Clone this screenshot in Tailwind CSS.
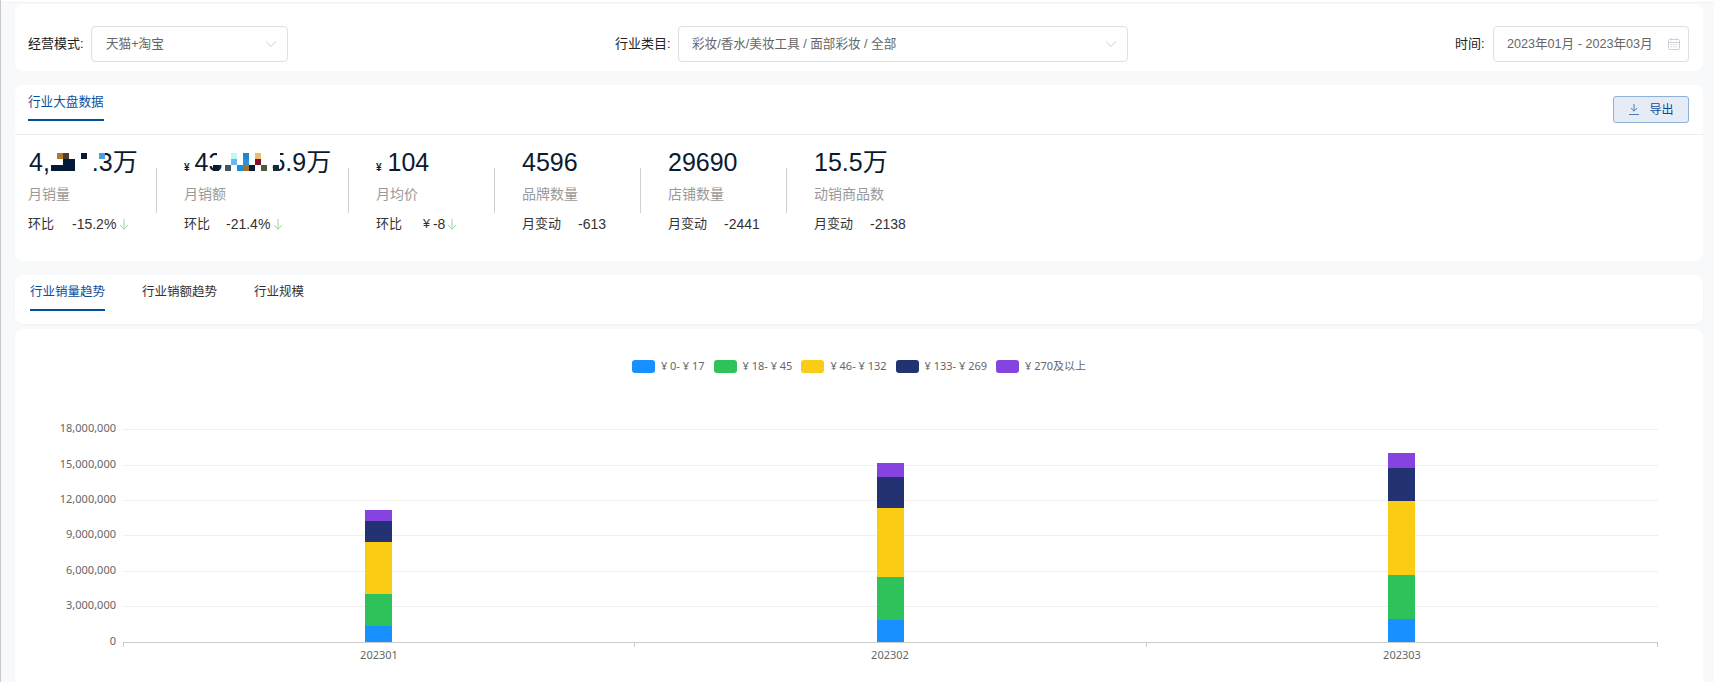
<!DOCTYPE html>
<html lang="zh">
<head>
<meta charset="utf-8">
<title>行业大盘数据</title>
<script src="https://cdn.jsdelivr.net/npm/@tailwindcss/browser@4"></script>
</head>
<body class="m-0">
<div class="w-[1714px] h-[682px] overflow-hidden bg-[#f8f9fb] border-l border-[#c8c8cc] pl-[14px] pr-[11px] text-[#333] [font-family:'Liberation_Sans','Noto_Sans_CJK_SC',sans-serif]">

  <div class="-ml-[14px] -mr-[11px] h-[3px] bg-white border-b border-[#f2f2f2] mb-px"></div>

  <!-- filters -->
  <div class="h-[67px] bg-white rounded-lg pt-[22px] pl-[13px] pr-[14px] flex justify-between items-start text-[12.6px]">
    <div class="flex items-center">
      <span class="w-[63px] text-[13px] text-[#222]">经营模式:</span>
      <div class="w-[197px] h-[36px] border border-[#dcdfe6] rounded flex items-center justify-between pl-[14px] pr-[10px] text-[#666]">
        <span>天猫+淘宝</span>
        <svg class="w-[12px] h-[8px]" viewBox="0 0 12 8" fill="none" stroke="#c8cbd2" stroke-width="1"><path d="M1 1.5 L6 6.5 L11 1.5"/></svg>
      </div>
    </div>
    <div class="flex items-center">
      <span class="w-[63px] text-[13px] text-[#222]">行业类目:</span>
      <div class="w-[450px] h-[36px] border border-[#dcdfe6] rounded flex items-center justify-between pl-[13px] pr-[10px] text-[#666]">
        <span>彩妆/香水/美妆工具 / 面部彩妆 / 全部</span>
        <svg class="w-[12px] h-[8px]" viewBox="0 0 12 8" fill="none" stroke="#c8cbd2" stroke-width="1"><path d="M1 1.5 L6 6.5 L11 1.5"/></svg>
      </div>
    </div>
    <div class="flex items-center">
      <span class="w-[38px] text-[13px] text-[#222]">时间:</span>
      <div class="w-[196px] h-[36px] border border-[#dcdfe6] rounded flex items-center justify-between pl-[13px] pr-[8px] text-[#666]">
        <span>2023年01月 - 2023年03月</span>
        <svg class="w-[12px] h-[12px]" viewBox="0 0 12 12" fill="none" stroke="#cdd0d6" stroke-width="1"><rect x="0.5" y="1.5" width="11" height="10" rx="1"/><path d="M0.5 4.5 H11.5 M3 0 V2.5 M9 0 V2.5"/><path d="M2.5 6.5 H9.5 M2.5 8.8 H9.5" stroke-dasharray="1.4 1"/></svg>
      </div>
    </div>
  </div>

  <!-- overview -->
  <div class="mt-[14px] h-[176px] bg-white rounded-lg">
    <div class="h-[50px] border-b border-[#ececec] pl-[13px] pr-[14px] flex justify-between items-start">
      <div class="mt-[8px] leading-[18px] pb-[8px] text-[12.6px] text-[#0b4e9c] border-b-2 border-[#004ea0]">行业大盘数据</div>
      <button class="mt-[11px] w-[76px] h-[27px] flex items-center justify-center gap-[10px] pl-px bg-[#e5ecf5] border border-[#8fb0d5] rounded-[3px] text-[12px] text-[#0b4e9c]">
        <svg class="w-[10px] h-[11px]" viewBox="0 0 10 11" fill="none" stroke="#4a7db5" stroke-width="1"><path d="M5 0 V7 M1.8 4 L5 7.2 L8.2 4 M0 10.5 H10"/></svg>
        <span>导出</span>
      </button>
    </div>
    <div class="flex pl-[13px] pt-[9px]">
      <!-- 月销量 -->
      <div class="w-[128px]">
        <div class="relative h-[36px] pl-px text-[25px] leading-[36px] text-[#0c1a2e] whitespace-nowrap">4,<span class="inline-block w-[42px]"></span>.3万
          <svg class="absolute left-0 top-0 w-[120px] h-[36px]" viewBox="0 0 120 36" shape-rendering="crispEdges" aria-hidden="true">
            <rect x="28.7" y="8.7" width="6" height="6" fill="#b07a2a"/><rect x="34.7" y="8.7" width="6" height="6" fill="#4a3f2f"/><rect x="53" y="8.7" width="6" height="6" fill="#0b1a33"/><rect x="71" y="8.7" width="6" height="6" fill="#4a9fdc"/>
            <rect x="34.7" y="14.7" width="12" height="6" fill="#021a35"/><rect x="22.7" y="20.7" width="24" height="6" fill="#021a35"/>
          </svg>
        </div>
        <div class="mt-[4px] text-[14px] leading-[20px] text-[#999]">月销量</div>
        <div class="mt-[10px] flex items-center leading-[20px] whitespace-nowrap"><span class="text-[13px] w-[44px]">环比</span><span class="text-[14px]">-15.2%</span>
          <svg class="ml-[3px] w-[10px] h-[11px]" viewBox="0 0 10 11" fill="none" stroke="#8fdc9f" stroke-width="1"><path d="M5 0 V10 M1 6 L5 10.3 L9 6"/></svg></div>
      </div>
      <div class="mt-[24px] h-[45px] w-px bg-[#d0d0d0] mr-[27px]"></div>
      <!-- 月销额 -->
      <div class="w-[164px]">
        <div class="relative h-[36px] text-[25px] leading-[36px] text-[#0c1a2e] whitespace-nowrap"><span class="text-[10px] font-bold mr-[5px]">¥</span>43<span class="inline-block w-[49px]"></span>5.9万
          <svg class="absolute left-0 top-0 w-[150px] h-[36px]" viewBox="0 0 150 36" shape-rendering="crispEdges" aria-hidden="true">
            <rect x="32.7" y="8" width="6" height="7" fill="#fff"/><rect x="29.3" y="14.7" width="9" height="6" fill="#fff"/><rect x="84" y="6" width="12" height="15" fill="#fff"/>
            <rect x="47.3" y="8.7" width="6" height="6" fill="#c4f5ff"/><rect x="59.3" y="8.7" width="6" height="6" fill="#1e86c9"/><rect x="71.3" y="8.7" width="6" height="6" fill="#efb873"/>
            <rect x="47.3" y="14.7" width="6" height="6" fill="#6ab6ee"/><rect x="59.3" y="14.7" width="6" height="6" fill="#2f8fd6"/><rect x="71.3" y="14.7" width="6" height="6" fill="#7f0f2a"/>
            <rect x="29.3" y="20.7" width="6" height="6" fill="#0a1c33"/><rect x="41.3" y="20.7" width="6" height="6" fill="#3f5a5c"/><rect x="53.3" y="20.7" width="6" height="6" fill="#0f93db"/><rect x="59.3" y="20.7" width="6" height="6" fill="#a9702e"/><rect x="65.3" y="20.7" width="6" height="6" fill="#0a1c33"/><rect x="77.3" y="20.7" width="6" height="6" fill="#4a5a3f"/><rect x="89.3" y="20.7" width="6" height="6" fill="#0a2f45"/>
          </svg>
        </div>
        <div class="mt-[4px] text-[14px] leading-[20px] text-[#999]">月销额</div>
        <div class="mt-[10px] flex items-center leading-[20px] whitespace-nowrap"><span class="text-[13px] w-[42px]">环比</span><span class="text-[14px]">-21.4%</span>
          <svg class="ml-[3px] w-[10px] h-[11px]" viewBox="0 0 10 11" fill="none" stroke="#8fdc9f" stroke-width="1"><path d="M5 0 V10 M1 6 L5 10.3 L9 6"/></svg></div>
      </div>
      <div class="mt-[24px] h-[45px] w-px bg-[#d0d0d0] mr-[27px]"></div>
      <!-- 月均价 -->
      <div class="w-[118px]">
        <div class="h-[36px] text-[25px] leading-[36px] text-[#0c1a2e] whitespace-nowrap"><span class="text-[10px] font-bold mr-[6px]">¥</span>104</div>
        <div class="mt-[4px] text-[14px] leading-[20px] text-[#999]">月均价</div>
        <div class="mt-[10px] flex items-center leading-[20px] whitespace-nowrap"><span class="text-[13px] w-[47px]">环比</span><span class="text-[12.5px] mr-[3px]">¥</span><span class="text-[14px]">-8</span>
          <svg class="ml-[2px] w-[10px] h-[11px]" viewBox="0 0 10 11" fill="none" stroke="#8fdc9f" stroke-width="1"><path d="M5 0 V10 M1 6 L5 10.3 L9 6"/></svg></div>
      </div>
      <div class="mt-[24px] h-[45px] w-px bg-[#d0d0d0] mr-[27px]"></div>
      <!-- 品牌数量 -->
      <div class="w-[118px]">
        <div class="h-[36px] text-[25px] leading-[36px] text-[#0c1a2e]">4596</div>
        <div class="mt-[4px] text-[14px] leading-[20px] text-[#999]">品牌数量</div>
        <div class="mt-[10px] flex items-center leading-[20px] whitespace-nowrap"><span class="text-[13px] w-[56px]">月变动</span><span class="text-[14px]">-613</span></div>
      </div>
      <div class="mt-[24px] h-[45px] w-px bg-[#d0d0d0] mr-[27px]"></div>
      <!-- 店铺数量 -->
      <div class="w-[118px]">
        <div class="h-[36px] text-[25px] leading-[36px] text-[#0c1a2e]">29690</div>
        <div class="mt-[4px] text-[14px] leading-[20px] text-[#999]">店铺数量</div>
        <div class="mt-[10px] flex items-center leading-[20px] whitespace-nowrap"><span class="text-[13px] w-[56px]">月变动</span><span class="text-[14px]">-2441</span></div>
      </div>
      <div class="mt-[24px] h-[45px] w-px bg-[#d0d0d0] mr-[27px]"></div>
      <!-- 动销商品数 -->
      <div>
        <div class="h-[36px] text-[25px] leading-[36px] text-[#0c1a2e]">15.5万</div>
        <div class="mt-[4px] text-[14px] leading-[20px] text-[#999]">动销商品数</div>
        <div class="mt-[10px] flex items-center leading-[20px] whitespace-nowrap"><span class="text-[13px] w-[56px]">月变动</span><span class="text-[14px]">-2138</span></div>
      </div>
    </div>
  </div>

  <!-- tabs -->
  <div class="mt-[14px] h-[49px] bg-white rounded-lg pl-[15px] flex gap-[37px] items-start text-[12.5px] shadow-[0_1px_3px_rgba(0,0,0,0.03)]">
    <div class="mt-[8px] leading-[18px] pb-[8px] text-[#0b4e9c] border-b-2 border-[#004ea0]">行业销量趋势</div>
    <div class="mt-[8px] leading-[18px]">行业销额趋势</div>
    <div class="mt-[8px] leading-[18px]">行业规模</div>
  </div>

  <!-- chart -->
  <div class="mt-[5px] h-[360px] bg-white rounded-lg pt-[31px]">
    <div class="h-[13px] flex justify-center items-center gap-[9px] text-[11px] text-[#666] [font-family:'Noto_Sans','Noto_Sans_CJK_SC',sans-serif] whitespace-nowrap">
      <div class="flex items-center gap-[6px]"><span class="w-[23px] h-[13px] rounded-[3px] bg-[#1890ff]"></span><span>¥ 0- ¥ 17</span></div>
      <div class="flex items-center gap-[6px]"><span class="w-[23px] h-[13px] rounded-[3px] bg-[#2fc25b]"></span><span>¥ 18- ¥ 45</span></div>
      <div class="flex items-center gap-[6px]"><span class="w-[23px] h-[13px] rounded-[3px] bg-[#facc14]"></span><span>¥ 46- ¥ 132</span></div>
      <div class="flex items-center gap-[6px]"><span class="w-[23px] h-[13px] rounded-[3px] bg-[#223273]"></span><span>¥ 133- ¥ 269</span></div>
      <div class="flex items-center gap-[6px]"><span class="w-[23px] h-[13px] rounded-[3px] bg-[#8543e0]"></span><span>¥ 270及以上</span></div>
    </div>
    <svg class="block w-[1688px] h-[309px] [font-family:'Noto_Sans',sans-serif]" viewBox="15 373 1688 309" font-size="11" fill="#666">
      <g stroke="#efefef" stroke-width="1">
        <path d="M123 429.5 H1658 M123 465.5 H1658 M123 500.5 H1658 M123 535.5 H1658 M123 571.5 H1658 M123 606.5 H1658"/>
      </g>
      <g text-anchor="end" dominant-baseline="central">
        <text x="116" y="427.5">18,000,000</text>
        <text x="116" y="463.5">15,000,000</text>
        <text x="116" y="498.5">12,000,000</text>
        <text x="116" y="533.5">9,000,000</text>
        <text x="116" y="569.5">6,000,000</text>
        <text x="116" y="604.5">3,000,000</text>
        <text x="116" y="640.5">0</text>
      </g>
      <g shape-rendering="crispEdges">
        <rect x="365" y="626" width="27" height="16" fill="#1890ff"/>
        <rect x="365" y="594" width="27" height="32" fill="#2fc25b"/>
        <rect x="365" y="542" width="27" height="52" fill="#facc14"/>
        <rect x="365" y="521" width="27" height="21" fill="#223273"/>
        <rect x="365" y="510" width="27" height="11" fill="#8543e0"/>

        <rect x="877" y="620" width="27" height="22" fill="#1890ff"/>
        <rect x="877" y="577" width="27" height="43" fill="#2fc25b"/>
        <rect x="877" y="508" width="27" height="69" fill="#facc14"/>
        <rect x="877" y="477" width="27" height="31" fill="#223273"/>
        <rect x="877" y="463" width="27" height="14" fill="#8543e0"/>

        <rect x="1388" y="619" width="27" height="23" fill="#1890ff"/>
        <rect x="1388" y="575" width="27" height="44" fill="#2fc25b"/>
        <rect x="1388" y="501" width="27" height="74" fill="#facc14"/>
        <rect x="1388" y="468" width="27" height="33" fill="#223273"/>
        <rect x="1388" y="453" width="27" height="15" fill="#8543e0"/>
      </g>
      <path d="M123 642.5 H1658 M123.5 642 V647 M634.5 642 V647 M1146.5 642 V647 M1657.5 642 V647" stroke="#ccc" stroke-width="1" fill="none"/>
      <g text-anchor="middle" dominant-baseline="central">
        <text x="379" y="654">202301</text>
        <text x="890" y="654">202302</text>
        <text x="1402" y="654">202303</text>
      </g>
    </svg>
  </div>
</div>
</body>
</html>
